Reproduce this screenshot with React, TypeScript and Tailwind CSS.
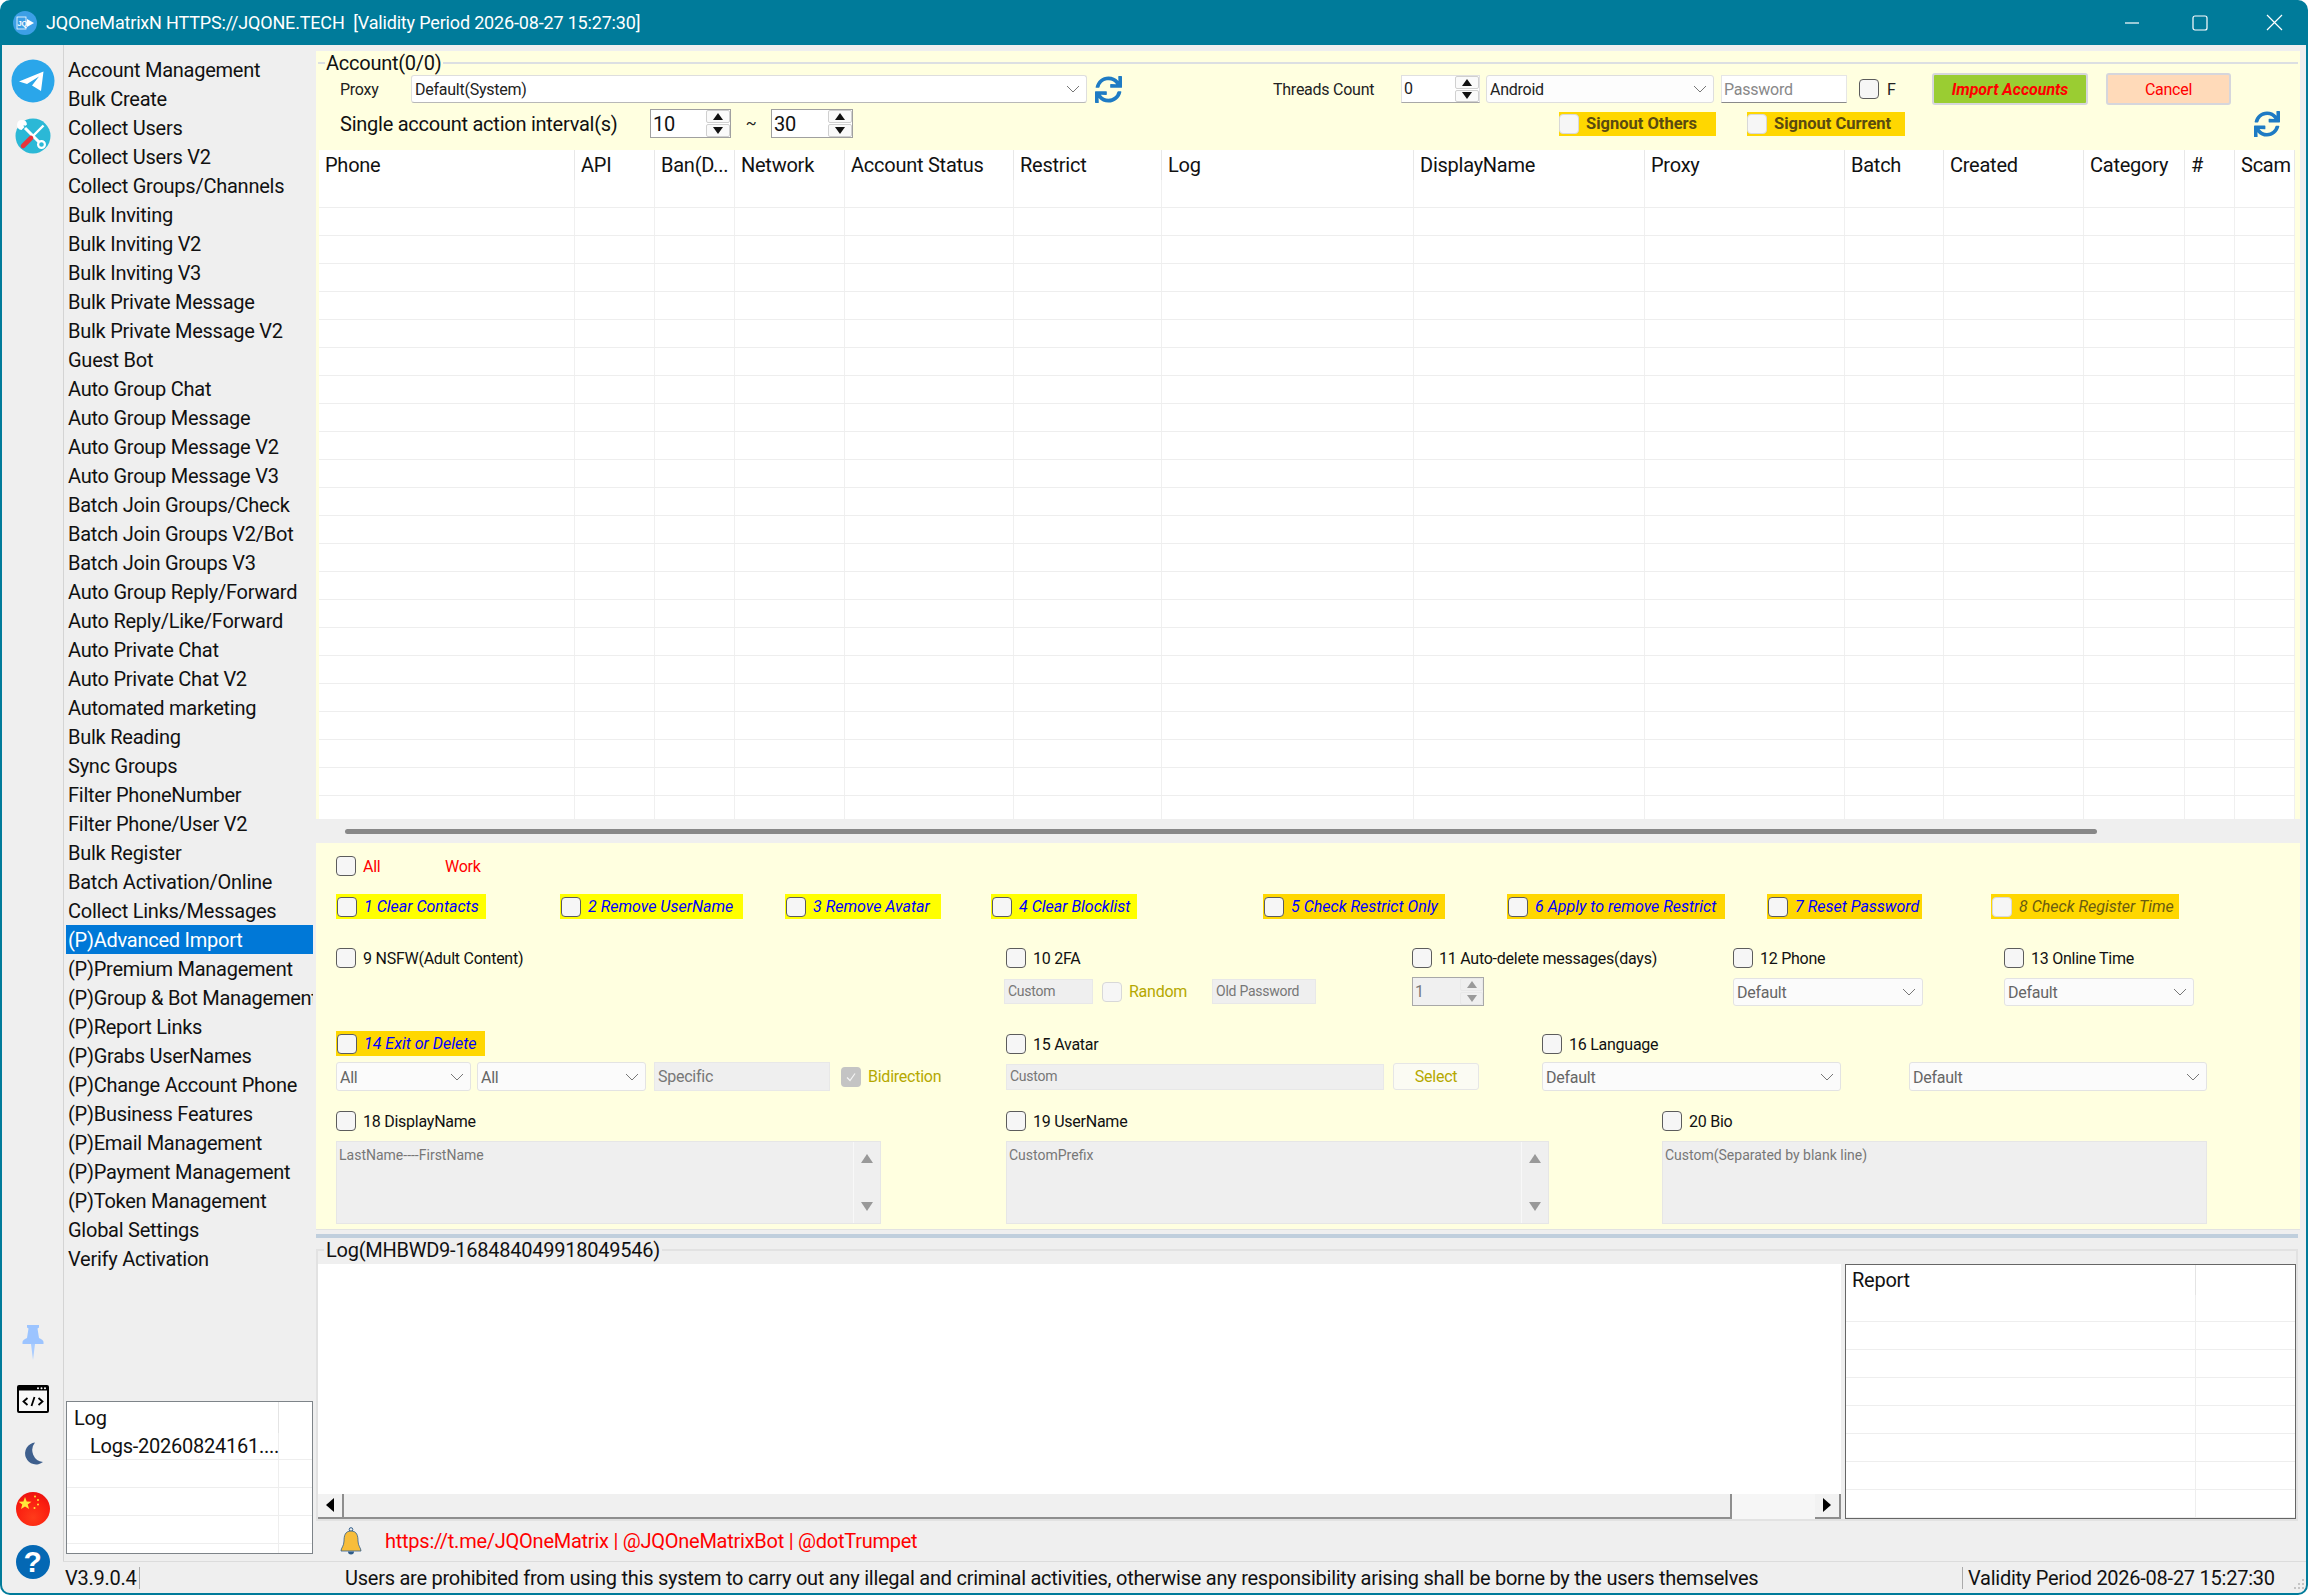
import { FaSync } from 'react-icons/fa';

const menuItems = [
    'Account Management', 'Bulk Create', 'Collect Users', 'Collect Users V2', 'Collect Groups/Channels',
    'Bulk Inviting', 'Bulk Inviting V2', 'Bulk Inviting V3', 'Bulk Private Message', 'Bulk Private Message V2',
    'Guest Bot', 'Auto Group Chat', 'Auto Group Message', 'Auto Group Message V2', 'Auto Group Message V3',
    'Batch Join Groups/Check', 'Batch Join Groups V2/Bot', 'Batch Join Groups V3', 'Auto Group Reply/Forward',
    'Auto Reply/Like/Forward', 'Auto Private Chat', 'Auto Private Chat V2', 'Automated marketing', 'Bulk Reading',
    'Sync Groups', 'Filter PhoneNumber', 'Filter Phone/User V2', 'Bulk Register', 'Batch Activation/Online',
    'Collect Links/Messages', '(P)Advanced Import', '(P)Premium Management', '(P)Group & Bot Management',
    '(P)Report Links', '(P)Grabs UserNames', '(P)Change Account Phone', '(P)Business Features',
    '(P)Email Management', '(P)Payment Management', '(P)Token Management', 'Global Settings', 'Verify Activation',
]

const columns = ['Phone', 'API', 'Ban(D...', 'Network', 'Account Status', 'Restrict', 'Log', 'DisplayName', 'Proxy', 'Batch', 'Created', 'Category', '#', 'Scam']

const widthClass = ['w-[256px]', 'w-[80px]', 'w-[80px]', 'w-[110px]', 'w-[169px]', 'w-[148px]', 'w-[252px]', 'w-[231px]', 'w-[200px]', 'w-[99px]', 'w-[140px]', 'w-[101px]', 'w-[50px]', 'w-[60px]']

const Check = ({ soft, disabled }: { soft?: boolean, disabled?: boolean }) => {
    if (disabled) {
        return (
            <span className="flex h-[20px] w-[20px] shrink-0 items-center justify-center rounded-[4px] bg-[#c4c4c4]">
                <svg width="12" height="12" viewBox="0 0 12 12"><path d="M2 6.5 L5 9.5 L10 2.5" fill="none" stroke="#f4f4f4" strokeWidth="1.2" /></svg>
            </span>
        )
    }
    return <span className={`block h-[20px] w-[20px] shrink-0 rounded-[4px] border bg-[#f6f6f6] ${soft ? 'border-[#d8d8d8]' : 'border-[#5c5c5c]'}`} />
}

const Chevron = () => (
    <svg width="14" height="8" viewBox="0 0 14 8" className="shrink-0"><path d="M1 1 L7 7 L13 1" fill="none" stroke="#777" strokeWidth="1" /></svg>
)

const Select = ({ text, className }: { text: string, className: string }) => (
    <div className={`flex shrink-0 items-center justify-between rounded-[3px] border border-[#e3e3e3] bg-[#fbfbfb] pl-[3px] pr-[6px] ${className}`}>
        <span className="pt-[2px] text-[16px] text-[#666]">{text}</span>
        <Chevron />
    </div>
)

const Spin = ({ small, gray }: { small?: boolean, gray?: boolean }) => (
    <div className={`flex h-full flex-col justify-center gap-[1px] ${small ? 'w-[23px]' : 'w-[24px]'}`}>
        <div className={`flex h-[13px] items-center justify-center rounded-[2px] border ${gray ? 'border-[#e8e8e8] bg-[#efefef]' : 'border-[#d0d0d0] bg-[#fafafa]'}`}>
            <svg width="10" height="7" viewBox="0 0 10 7"><path d="M5 0 L10 7 L0 7 Z" fill={gray ? '#9a9a9a' : '#111'} /></svg>
        </div>
        <div className={`flex h-[13px] items-center justify-center rounded-[2px] border ${gray ? 'border-[#e8e8e8] bg-[#efefef]' : 'border-[#d0d0d0] bg-[#fafafa]'}`}>
            <svg width="10" height="7" viewBox="0 0 10 7"><path d="M0 0 L10 0 L5 7 Z" fill={gray ? '#9a9a9a' : '#111'} /></svg>
        </div>
    </div>
)

const Chip = ({ text, gold, muted, className }: { text: string, gold?: boolean, muted?: boolean, className: string }) => (
    <div className={`flex h-[25px] shrink-0 items-center pl-[1px] ${gold ? 'bg-[#ffd700]' : 'bg-[#ffff00]'} ${className}`}>
        <Check soft={muted} />
        <span className={`ml-[7px] whitespace-nowrap text-[16px] italic tracking-normal ${muted ? 'text-[#6b5c10]' : 'text-[#0000ff]'}`}>{text}</span>
    </div>
)

const Labeled = ({ text, className }: { text: string, className: string }) => (
    <div className={`flex shrink-0 items-center ${className}`}>
        <Check />
        <span className="ml-[7px] whitespace-nowrap pt-[2px] text-[16px] text-[#111]">{text}</span>
    </div>
)

const GrayInput = ({ text, className }: { text: string, className: string }) => (
    <div className={`flex shrink-0 items-center border border-[#e8e8e8] bg-[#efefef] pl-[3px] text-[14px] text-[#777] ${className}`}>{text}</div>
)

const GrayArea = ({ text, scroll, className }: { text: string, scroll?: boolean, className: string }) => (
    <div className={`flex h-[83px] shrink-0 justify-between border border-[#e6e6e6] bg-[#efefef] ${className}`}>
        <span className="pl-[2px] pt-[3px] text-[14px] tracking-normal text-[#777]">{text}</span>
        {scroll && (
            <div className="flex w-[27px] flex-col items-center justify-between border-l border-[#f8f8f8] py-[12px]">
                <svg width="12" height="9" viewBox="0 0 12 9"><path d="M6 0 L12 9 L0 9 Z" fill="#999" /></svg>
                <svg width="12" height="9" viewBox="0 0 12 9"><path d="M0 0 L12 0 L6 9 Z" fill="#999" /></svg>
            </div>
        )}
    </div>
)

const LogoIcon = () => (
    <svg width="24" height="24" viewBox="0 0 24 24">
        <circle cx="12" cy="12" r="12" fill="#3C9FE6" />
        <rect x="4" y="6" width="9" height="12" fill="none" stroke="#fff" strokeWidth="0.8" />
        <text x="4.6" y="15" fontSize="7.5" fontWeight="700" fill="#fff" fontFamily="Liberation Sans">JQ</text>
        <path d="M14 8 L21 12 L14 16 Z" fill="#fff" />
    </svg>
)

const TelegramIcon = () => (
    <svg width="44" height="44" viewBox="0 0 44 44">
        <circle cx="22" cy="22" r="21.5" fill="#2AA6EA" />
        <path d="M8 22.5 L32.5 12.5 L30 32 L21 26.5 L28 17.5 L16 25 Z" fill="#fff" />
    </svg>
)

const ToolsIcon = () => (
    <svg width="36" height="36" viewBox="0 0 36 36">
        <circle cx="18" cy="18" r="17.5" fill="#2BB8D6" />
        <path d="M10 10 L25 25" stroke="#fff" strokeWidth="3" />
        <path d="M12 6.5 A5 5 0 1 0 6.5 12 L9.5 9 L8.5 8 L9 7 L10 8 Z" fill="#fff" />
        <circle cx="26.5" cy="26.5" r="3.4" fill="#2BB8D6" stroke="#fff" strokeWidth="2.2" />
        <path d="M17 19 L28.5 7.5" stroke="#fff" strokeWidth="2.4" />
        <path d="M8 28 L16 20" stroke="#E8333A" strokeWidth="4.6" strokeLinecap="round" />
    </svg>
)

const PinIcon = () => (
    <svg width="22" height="36" viewBox="0 0 22 36">
        <path d="M5 0 H17 V2.5 L15.5 3.5 L17 13 Q21.5 15 21.5 17 V19 H0.5 V17 Q0.5 15 5 13 L6.5 3.5 L5 2.5 Z" fill="#9CC4FF" />
        <path d="M9 19 H13 L11 35 Z" fill="#A9CCFF" />
    </svg>
)

const CodeIcon = () => (
    <svg width="32" height="28" viewBox="0 0 32 28">
        <rect x="1" y="1" width="30" height="26" rx="1" fill="#f8f8f8" stroke="#000" strokeWidth="2" />
        <rect x="1" y="1" width="30" height="4.5" fill="#000" />
        <circle cx="21" cy="3.2" r="1" fill="#fff" />
        <circle cx="24.5" cy="3.2" r="1" fill="#fff" />
        <circle cx="28" cy="3.2" r="1" fill="#fff" />
        <path d="M10.5 13 L6.5 16.5 L10.5 20 M21.5 13 L25.5 16.5 L21.5 20 M17.5 12 L14.5 21" fill="none" stroke="#000" strokeWidth="1.8" />
    </svg>
)

const MoonIcon = () => (
    <svg width="20" height="23" viewBox="0 0 20 23">
        <path d="M12 0.5 A11 11 0 1 0 20 20 A12 12 0 0 1 12 0.5 Z" fill="#3E5F8D" />
    </svg>
)

const FlagIcon = () => (
    <svg width="34" height="34" viewBox="0 0 34 34">
        <defs>
            <radialGradient id="flag" cx="0.5" cy="0.75" r="0.8">
                <stop offset="0" stopColor="#ff3b1a" />
                <stop offset="0.6" stopColor="#fb1f10" />
                <stop offset="1" stopColor="#e81010" />
            </radialGradient>
        </defs>
        <circle cx="17" cy="17" r="17" fill="url(#flag)" />
        <path d="M9 5 L10.7 9.6 L15.5 9.7 L11.7 12.6 L13.1 17 L9 14.4 L5 17 L6.3 12.6 L2.6 9.7 L7.4 9.6 Z" fill="#FFE83A" />
        <circle cx="19" cy="4.5" r="1" fill="#FFE83A" />
        <circle cx="22" cy="8" r="1" fill="#FFE83A" />
        <circle cx="22" cy="12.5" r="1" fill="#FFE83A" />
        <circle cx="18.5" cy="16" r="1" fill="#FFE83A" />
    </svg>
)

const HelpIcon = () => (
    <div className="flex h-[34px] w-[34px] items-center justify-center rounded-full bg-[#0468B4] font-['Liberation_Sans',sans-serif] text-[30px] font-bold leading-none text-white">?</div>
)

const BellIcon = () => (
    <svg width="22" height="29" viewBox="0 0 22 29">
        <circle cx="11" cy="2.5" r="1.8" fill="none" stroke="#2D5C8A" strokeWidth="1" />
        <path d="M11 4 C5 4 4 9 4 14 C4 19 1 21 1 24 L21 24 C21 21 18 19 18 14 C18 9 17 4 11 4 Z" fill="#F7BD3A" stroke="#2D5C8A" strokeWidth="0.8" />
        <path d="M8 24.5 A3 3 0 0 0 14 24.5 Z" fill="#2D5C8A" />
    </svg>
)

const GripIcon = () => (
    <svg width="10" height="10" viewBox="0 0 10 10" className="ml-auto mr-[2px] mt-[12px] shrink-0">
        <rect x="8" y="0" width="2" height="2" fill="#c4c4c4" />
        <rect x="4" y="4" width="2" height="2" fill="#c4c4c4" />
        <rect x="8" y="4" width="2" height="2" fill="#c4c4c4" />
        <rect x="0" y="8" width="2" height="2" fill="#c4c4c4" />
        <rect x="4" y="8" width="2" height="2" fill="#c4c4c4" />
        <rect x="8" y="8" width="2" height="2" fill="#c4c4c4" />
    </svg>
)

const WindowControls = () => (
    <div className="ml-auto flex items-center">
        <svg width="16" height="16" viewBox="0 0 16 16"><path d="M1 8 H15" stroke="#fff" strokeWidth="1.2" /></svg>
        <svg width="16" height="16" viewBox="0 0 16 16" className="ml-[52px]"><rect x="1" y="1" width="14" height="14" rx="2" fill="none" stroke="#fff" strokeWidth="1.2" /></svg>
        <svg width="17" height="17" viewBox="0 0 17 17" className="ml-[58px] mr-[25px]"><path d="M1 1 L16 16 M16 1 L1 16" stroke="#fff" strokeWidth="1.2" /></svg>
    </div>
)

const Rail = () => (
    <div className="flex w-[61px] shrink-0 flex-col items-center pt-[14px]">
        <TelegramIcon />
        <div className="mt-[15px]"><ToolsIcon /></div>
        <div className="mt-[1171px]"><PinIcon /></div>
        <div className="mt-[24px]"><CodeIcon /></div>
        <div className="mt-[29px]"><MoonIcon /></div>
        <div className="mt-[27px]"><FlagIcon /></div>
        <div className="mt-[19px]"><HelpIcon /></div>
    </div>
)

const Menu = () => (
    <div className="flex w-[253px] shrink-0 flex-col justify-between border-l border-[#d4d4d4] pb-[7px] pt-[10px]">
        <ul>
            {menuItems.map((item) => (
                <li key={item} className={`ml-[2px] h-[29px] w-[247px] overflow-hidden whitespace-nowrap pl-[2px] text-[20px] leading-[31px] ${item === '(P)Advanced Import' ? 'bg-[#0078D7] text-white' : 'text-[#111]'}`}>{item}</li>
            ))}
        </ul>
        <div className="ml-[2px] h-[153px] w-[247px] overflow-hidden border border-[#7e8489] bg-white">
            <div className="flex h-[31px]">
                <div className="w-[212px] border-r border-[#e4e4e4] pl-[7px] text-[20px] leading-[32px] text-[#111]">Log</div>
            </div>
            <div className="flex h-[27px] border-b border-[#eeeeee]">
                <div className="w-[212px] whitespace-nowrap border-r border-[#eeeeee] pl-[23px] text-[20px] leading-[27px] text-[#111]">Logs-20260824161....</div>
            </div>
            {[0, 1, 2, 3].map((i) => (
                <div key={i} className="flex h-[28px] border-b border-[#eeeeee]">
                    <div className="w-[212px] border-r border-[#eeeeee]" />
                </div>
            ))}
        </div>
    </div>
)

const AccountTable = () => (
    <div className="mx-[3px] h-[669px] w-[1976px] overflow-hidden bg-white">
        <div className="flex h-[30px]">
            {columns.map((name, i) => (
                <div key={i} className={`flex h-[30px] shrink-0 items-center border-r border-[#e8e8e8] pl-[6px] text-[20px] text-[#111] ${widthClass[i]}`}>{name}</div>
            ))}
        </div>
        {Array.from({ length: 23 }).map((_, row) => (
            <div key={row} className="flex h-[28px] border-b border-[#eeeeee]">
                {columns.map((name, i) => (
                    <div key={i} className={`h-full shrink-0 border-r border-[#f0f0f0] ${widthClass[i]}`} />
                ))}
            </div>
        ))}
    </div>
)

const AccountPanel = () => (
    <fieldset className="ml-[2px] mr-[2px] h-[97px] border-t-2 border-[#dcdfe2]">
        <legend className="ml-[7px] px-[1px] text-[20px] leading-[24px] text-[#111]">Account(0/0)</legend>
        <div className="flex h-[28px] items-center pl-[22px]">
            <span className="w-[71px] shrink-0 pt-[2px] text-[16px] text-[#222]">Proxy</span>
            <div className="flex h-[28px] w-[676px] shrink-0 items-center justify-between rounded-[3px] border border-[#dedede] border-b-[#b8b8b8] bg-white pl-[3px] pr-[6px]">
                <span className="pt-[2px] text-[16px] text-[#222]">Default(System)</span>
                <Chevron />
            </div>
            <FaSync className="ml-[8px] shrink-0 text-[#1E7BC4]" size={27} />
            <span className="ml-[151px] w-[128px] shrink-0 pt-[2px] text-[16px] text-[#222]">Threads Count</span>
            <div className="flex h-[28px] w-[79px] shrink-0 items-center justify-between border border-[#e0e0e0] border-b-[#a8a8a8] bg-white pl-[2px]">
                <span className="text-[16px] leading-none text-[#222]">0</span>
                <Spin />
            </div>
            <div className="ml-[6px] flex h-[28px] w-[228px] shrink-0 items-center justify-between rounded-[3px] border border-[#dedede] bg-[#fdfdfd] pl-[3px] pr-[6px]">
                <span className="pt-[2px] text-[16px] text-[#222]">Android</span>
                <Chevron />
            </div>
            <div className="ml-[7px] flex h-[28px] w-[126px] shrink-0 items-center border border-[#e6e6e6] border-b-[#8a8a8a] bg-white pl-[2px] pt-[1px] text-[16px] text-[#888]">Password</div>
            <div className="ml-[12px]"><Check /></div>
            <span className="ml-[8px] w-[45px] shrink-0 pt-[2px] text-[16px] text-[#222]">F</span>
            <div className="flex h-[32px] w-[156px] shrink-0 items-center justify-center rounded-[3px] border-2 border-[#d6d6dc] bg-[#9ACD32] pt-[2px] text-[16px] font-bold italic tracking-normal text-[#ff0000]">Import Accounts</div>
            <div className="ml-[18px] flex h-[32px] w-[125px] shrink-0 items-center justify-center rounded-[3px] border-2 border-[#d6d6dc] bg-[#FFDAB9] pt-[2px] text-[16px] text-[#ff0000]">Cancel</div>
        </div>
        <div className="mt-[6px] flex h-[29px] items-center pl-[22px]">
            <span className="w-[310px] shrink-0 whitespace-nowrap text-[20px] text-[#111]">Single account action interval(s)</span>
            <div className="flex h-[29px] w-[81px] shrink-0 items-center justify-between border border-[#a0a0a0] bg-white pl-[2px]">
                <span className="text-[20px] leading-none text-[#111]">10</span>
                <Spin />
            </div>
            <span className="w-[40px] shrink-0 text-center text-[16px] text-[#222]">~</span>
            <div className="flex h-[29px] w-[82px] shrink-0 items-center justify-between border border-[#a0a0a0] bg-white pl-[2px]">
                <span className="text-[20px] leading-none text-[#111]">30</span>
                <Spin />
            </div>
            <div className="ml-[706px] flex h-[24px] w-[157px] shrink-0 items-center bg-[#ffd700]">
                <Check soft />
                <span className="ml-[7px] whitespace-nowrap pt-[2px] text-[16.5px] font-bold tracking-normal text-[#5a4a10]">Signout Others</span>
            </div>
            <div className="ml-[31px] flex h-[24px] w-[158px] shrink-0 items-center bg-[#ffd700]">
                <Check soft />
                <span className="ml-[7px] whitespace-nowrap pt-[2px] text-[16.5px] font-bold tracking-normal text-[#5a4a10]">Signout Current</span>
            </div>
            <FaSync className="ml-[349px] shrink-0 text-[#1E7BC4]" size={26} />
        </div>
    </fieldset>
)

const OptionsForm = () => (
    <div className="h-[387px] border-b border-[#e2e2e2] bg-[#ffffe0] pl-[20px] pt-[13px]">
        <div className="flex h-[20px] items-center">
            <Check />
            <span className="ml-[7px] w-[82px] pt-[2px] text-[16px] text-[#ff0000]">All</span>
            <span className="pt-[2px] text-[16px] text-[#ff0000]">Work</span>
        </div>
        <div className="mt-[18px] flex">
            <Chip text="1 Clear Contacts" className="w-[150px]" />
            <Chip text="2 Remove UserName" className="ml-[74px] w-[183px]" />
            <Chip text="3 Remove Avatar" className="ml-[42px] w-[156px]" />
            <Chip text="4 Clear Blocklist" className="ml-[50px] w-[146px]" />
            <Chip text="5 Check Restrict Only" gold className="ml-[126px] w-[182px]" />
            <Chip text="6 Apply to remove Restrict" gold className="ml-[62px] w-[218px]" />
            <Chip text="7 Reset Password" gold className="ml-[42px] w-[155px]" />
            <Chip text="8 Check Register Time" gold muted className="ml-[69px] w-[188px]" />
        </div>
        <div className="mt-[29px] flex h-[20px]">
            <Labeled text="9 NSFW(Adult Content)" className="w-[670px]" />
            <Labeled text="10 2FA" className="w-[406px]" />
            <Labeled text="11 Auto-delete messages(days)" className="w-[321px]" />
            <Labeled text="12 Phone" className="w-[271px]" />
            <Labeled text="13 Online Time" className="w-[200px]" />
        </div>
        <div className="mt-[9px] flex h-[29px] items-center">
            <GrayInput text="Custom" className="ml-[668px] h-[25px] w-[89px]" />
            <div className="ml-[9px]"><Check soft /></div>
            <span className="ml-[7px] w-[83px] shrink-0 text-[16px] text-[#b5a800]">Random</span>
            <GrayInput text="Old Password" className="h-[25px] w-[104px]" />
            <div className="ml-[96px] flex h-[29px] w-[72px] shrink-0 items-center justify-between border border-[#a8a8a8] bg-[#f0f0f0] pl-[2px]">
                <span className="text-[16px] leading-none text-[#777]">1</span>
                <Spin small gray />
            </div>
            <Select text="Default" className="ml-[249px] h-[28px] w-[190px]" />
            <Select text="Default" className="ml-[81px] h-[28px] w-[190px]" />
        </div>
        <div className="mt-[25px] flex h-[25px] items-center">
            <div className="w-[670px] shrink-0"><Chip text="14 Exit or Delete" gold className="w-[149px]" /></div>
            <Labeled text="15 Avatar" className="w-[536px]" />
            <Labeled text="16 Language" className="w-[300px]" />
        </div>
        <div className="mt-[6px] flex h-[29px] items-center">
            <Select text="All" className="h-[29px] w-[135px]" />
            <Select text="All" className="ml-[6px] h-[29px] w-[169px]" />
            <GrayInput text="Specific" className="ml-[8px] h-[29px] w-[176px] text-[16px]" />
            <div className="ml-[11px]"><Check disabled /></div>
            <span className="ml-[7px] w-[74px] shrink-0 whitespace-nowrap text-[16px] text-[#b5a800]">Bidirection</span>
            <GrayInput text="Custom" className="ml-[64px] h-[26px] w-[378px]" />
            <div className="ml-[9px] flex h-[27px] w-[86px] shrink-0 items-center justify-center rounded-[3px] border border-[#e6e6e6] bg-[#fbfbf3] text-[16px] text-[#b5a800]">Select</div>
            <Select text="Default" className="ml-[63px] h-[29px] w-[299px]" />
            <Select text="Default" className="ml-[68px] h-[29px] w-[298px]" />
        </div>
        <div className="mt-[20px] flex h-[20px]">
            <Labeled text="18 DisplayName" className="w-[670px]" />
            <Labeled text="19 UserName" className="w-[656px]" />
            <Labeled text="20 Bio" className="w-[200px]" />
        </div>
        <div className="mt-[10px] flex">
            <GrayArea text="LastName----FirstName" scroll className="w-[545px]" />
            <GrayArea text="CustomPrefix" scroll className="ml-[125px] w-[543px]" />
            <GrayArea text="Custom(Separated by blank line)" className="ml-[113px] w-[545px]" />
        </div>
    </div>
)

const LogPanel = () => (
    <fieldset className="mr-[8px] mt-[1px] h-[283px] border-2 border-[#e2e2e2] px-0">
        <legend className="ml-[6px] px-[2px] text-[20px] leading-[22px] text-[#111]">Log(MHBWD9-168484049918049546)</legend>
        <div className="mt-[3px] flex h-[255px]">
            <div className="flex w-[1523px] shrink-0 flex-col">
                <div className="h-[230px] bg-white" />
                <div className="flex h-[25px] items-stretch bg-[#f4f4f4]">
                    <div className="flex w-[26px] items-center justify-center border-b-2 border-r-2 border-[#8e8e8e] bg-[#f2f2f2]">
                        <svg width="8" height="14" viewBox="0 0 8 14"><path d="M8 0 V14 L0 7 Z" fill="#000" /></svg>
                    </div>
                    <div className="w-[1388px] border-b-2 border-r-2 border-[#8e8e8e] bg-[#f0f0f0]" />
                    <div className="w-[83px] bg-[#f6f6f6]" />
                    <div className="flex w-[26px] items-center justify-center border-b-2 border-r-2 border-[#8e8e8e] bg-[#f2f2f2]">
                        <svg width="8" height="14" viewBox="0 0 8 14"><path d="M0 0 V14 L8 7 Z" fill="#000" /></svg>
                    </div>
                </div>
            </div>
            <div className="ml-[4px] w-[451px] shrink-0 overflow-hidden border border-[#666] bg-white">
                <div className="flex h-[30px]">
                    <div className="w-[350px] border-r border-[#e4e4e4] pl-[6px] text-[20px] leading-[30px] text-[#111]">Report</div>
                </div>
                {Array.from({ length: 8 }).map((_, i) => (
                    <div key={i} className={`flex border-b border-[#eeeeee] ${i === 0 ? 'h-[27px]' : 'h-[28px]'}`}>
                        <div className="w-[350px] border-r border-[#eeeeee]" />
                    </div>
                ))}
            </div>
        </div>
    </fieldset>
)

export default function App() {
    return (
        <div className="flex h-[1595px] w-[2308px] flex-col overflow-hidden rounded-[10px] bg-[#007B9A] font-['Roboto','Noto_Sans',sans-serif] tracking-[-0.25px]">
            <div className="flex h-[45px] shrink-0 items-center pl-[13px]">
                <LogoIcon />
                <span className="ml-[9px] whitespace-pre text-[18px] tracking-[-0.17px] text-white">JQOneMatrixN HTTPS://JQONE.TECH  [Validity Period 2026-08-27 15:27:30]</span>
                <WindowControls />
            </div>
            <div className="mx-[2px] mb-[2px] flex h-[1548px] rounded-b-[8px] bg-[#efefef]">
                <Rail />
                <div className="flex w-[2243px] flex-col">
                    <div className="flex h-[1516px]">
                        <Menu />
                        <div className="flex w-[1990px] flex-col pt-[6px]">
                            <div className="mr-[6px] bg-[#ffffe0]">
                                <AccountPanel />
                                <div className="mt-[2px]"><AccountTable /></div>
                                <div className="flex h-[24px] items-center bg-[#efefef] pl-[29px]">
                                    <div className="h-[5px] w-[1752px] rounded-full bg-[#888888]" />
                                </div>
                                <OptionsForm />
                            </div>
                            <div className="mr-[8px] mt-[4px] h-[4px] bg-[#c0cfdd]" />
                            <LogPanel />
                            <div className="flex h-[40px] items-center pl-[24px]">
                                <BellIcon />
                                <span className="ml-[23px] text-[20px] text-[#ff0000]">https://t.me/JQOneMatrix | @JQOneMatrixBot | @dotTrumpet</span>
                            </div>
                        </div>
                    </div>
                    <div className="flex h-[32px] items-center border-t border-[#dcdcdc] text-[20px] text-[#111]">
                        <span className="ml-[2px] w-[74px]">V3.9.0.4</span>
                        <span className="h-[22px] border-l border-[#aaa]" />
                        <span className="ml-[205px] w-[1617px] whitespace-nowrap">Users are prohibited from using this system to carry out any illegal and criminal activities, otherwise any responsibility arising shall be borne by the users themselves</span>
                        <span className="h-[22px] border-l border-[#aaa]" />
                        <span className="ml-[5px] whitespace-nowrap">Validity Period 2026-08-27 15:27:30</span>
                        <GripIcon />
                    </div>
                </div>
            </div>
        </div>
    )
}
